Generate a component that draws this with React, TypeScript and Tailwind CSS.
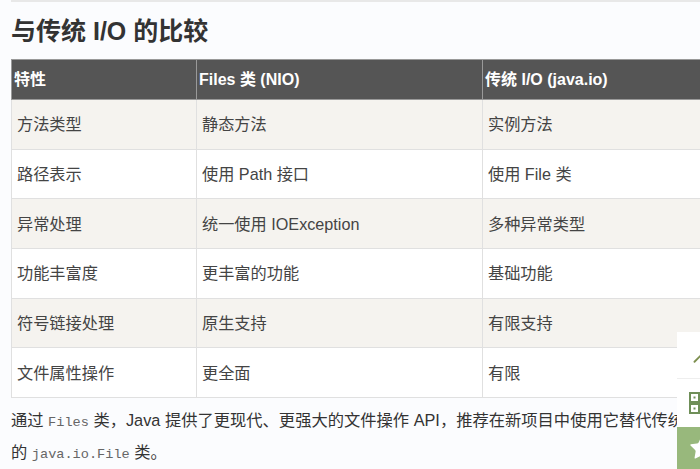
import { ChevronUp, Star } from "lucide-react";

const rows = [
  ["方法类型", "静态方法", "实例方法"],
  ["路径表示", "使用 Path 接口", "使用 File 类"],
  ["异常处理", "统一使用 IOException", "多种异常类型"],
  ["功能丰富度", "更丰富的功能", "基础功能"],
  ["符号链接处理", "原生支持", "有限支持"],
  ["文件属性操作", "更全面", "有限"],
];

const font = "font-['Liberation_Sans','Noto_Sans_CJK_SC',sans-serif]";
const mono = "font-['Liberation_Mono','Noto_Sans_CJK_SC',monospace] text-[13.6px] leading-none text-[#666]";

const QrIcon = () => (
  <svg width="22" height="22" viewBox="0 0 22 22" fill="none" stroke="#6f8f58" strokeWidth="2">
    <rect x="1" y="1" width="9" height="9" />
    <rect x="1" y="12" width="9" height="9" />
    <rect x="12" y="1" width="9" height="9" />
    <rect x="12" y="12" width="9" height="9" />
    <rect x="4.5" y="4.5" width="2" height="2" fill="#6f8f58" stroke="none" />
    <rect x="4.5" y="15.5" width="2" height="2" fill="#6f8f58" stroke="none" />
    <rect x="15.5" y="4.5" width="2" height="2" fill="#6f8f58" stroke="none" />
    <rect x="15.5" y="15.5" width="2" height="2" fill="#6f8f58" stroke="none" />
  </svg>
);

const App = () => {
  return (
    <div className={`relative h-[469px] w-[700px] overflow-hidden bg-[#fbfcfe] text-[#333] ${font}`}>
      <div className="pl-[11px]">
        <div className="h-[2px] bg-[#e8e8e8]" />
        <h2 className="mt-[14px] h-[43px] text-[25px] leading-[30px] font-bold">与传统 I/O 的比较</h2>

        <table className="w-[760px] table-fixed border-collapse text-[16.2px]">
          <colgroup>
            <col className="w-[185px]" />
            <col className="w-[286px]" />
            <col />
          </colgroup>
          <thead>
            <tr className="h-[40px] bg-[#555] text-[16px] text-white">
              <th className="border border-[#999] px-[2px] text-left font-bold">特性</th>
              <th className="border border-[#999] px-[2px] text-left font-bold">Files 类 (NIO)</th>
              <th className="border border-[#999] px-[2px] text-left font-bold">传统 I/O (java.io)</th>
            </tr>
          </thead>
          <tbody>
            {rows.map((row, i) => (
              <tr key={row[0]} className={i % 2 === 0 ? "h-[49.7px] bg-[#f5f3ef]" : "h-[49.7px] bg-white"}>
                {row.map((cell) => (
                  <td key={cell} className="border border-[#e0e0e0] px-[5px] text-[#444]">
                    {cell}
                  </td>
                ))}
              </tr>
            ))}
          </tbody>
        </table>

        <p className="mt-[6px] w-[684px] text-[16.3px] leading-[32px] text-[#333]">
          通过 <code className={mono}>Files</code> 类，Java
          提供了更现代、更强大的文件操作 API，推荐在新项目中使用它替代传统的{" "}
          <code className={mono}>java.io.File</code> 类。
        </p>
      </div>

      <div className="absolute top-[332px] right-0 flex w-[23px] flex-col overflow-hidden">
        <div className="flex h-[47px] items-center border-b border-[#eee] bg-white">
          <ChevronUp size={30} strokeWidth={1.5} className="mt-[6px] ml-[10px] shrink-0 text-[#7d8f4f]" />
        </div>
        <div className="flex h-[48px] items-center bg-white pl-[12px]">
          <div className="shrink-0">
            <QrIcon />
          </div>
        </div>
        <div className="flex h-[42px] items-center bg-[#98b87c] pl-[11px]">
          <Star size={28} fill="white" strokeWidth={0} className="shrink-0" />
        </div>
      </div>
    </div>
  );
};

export default App;
